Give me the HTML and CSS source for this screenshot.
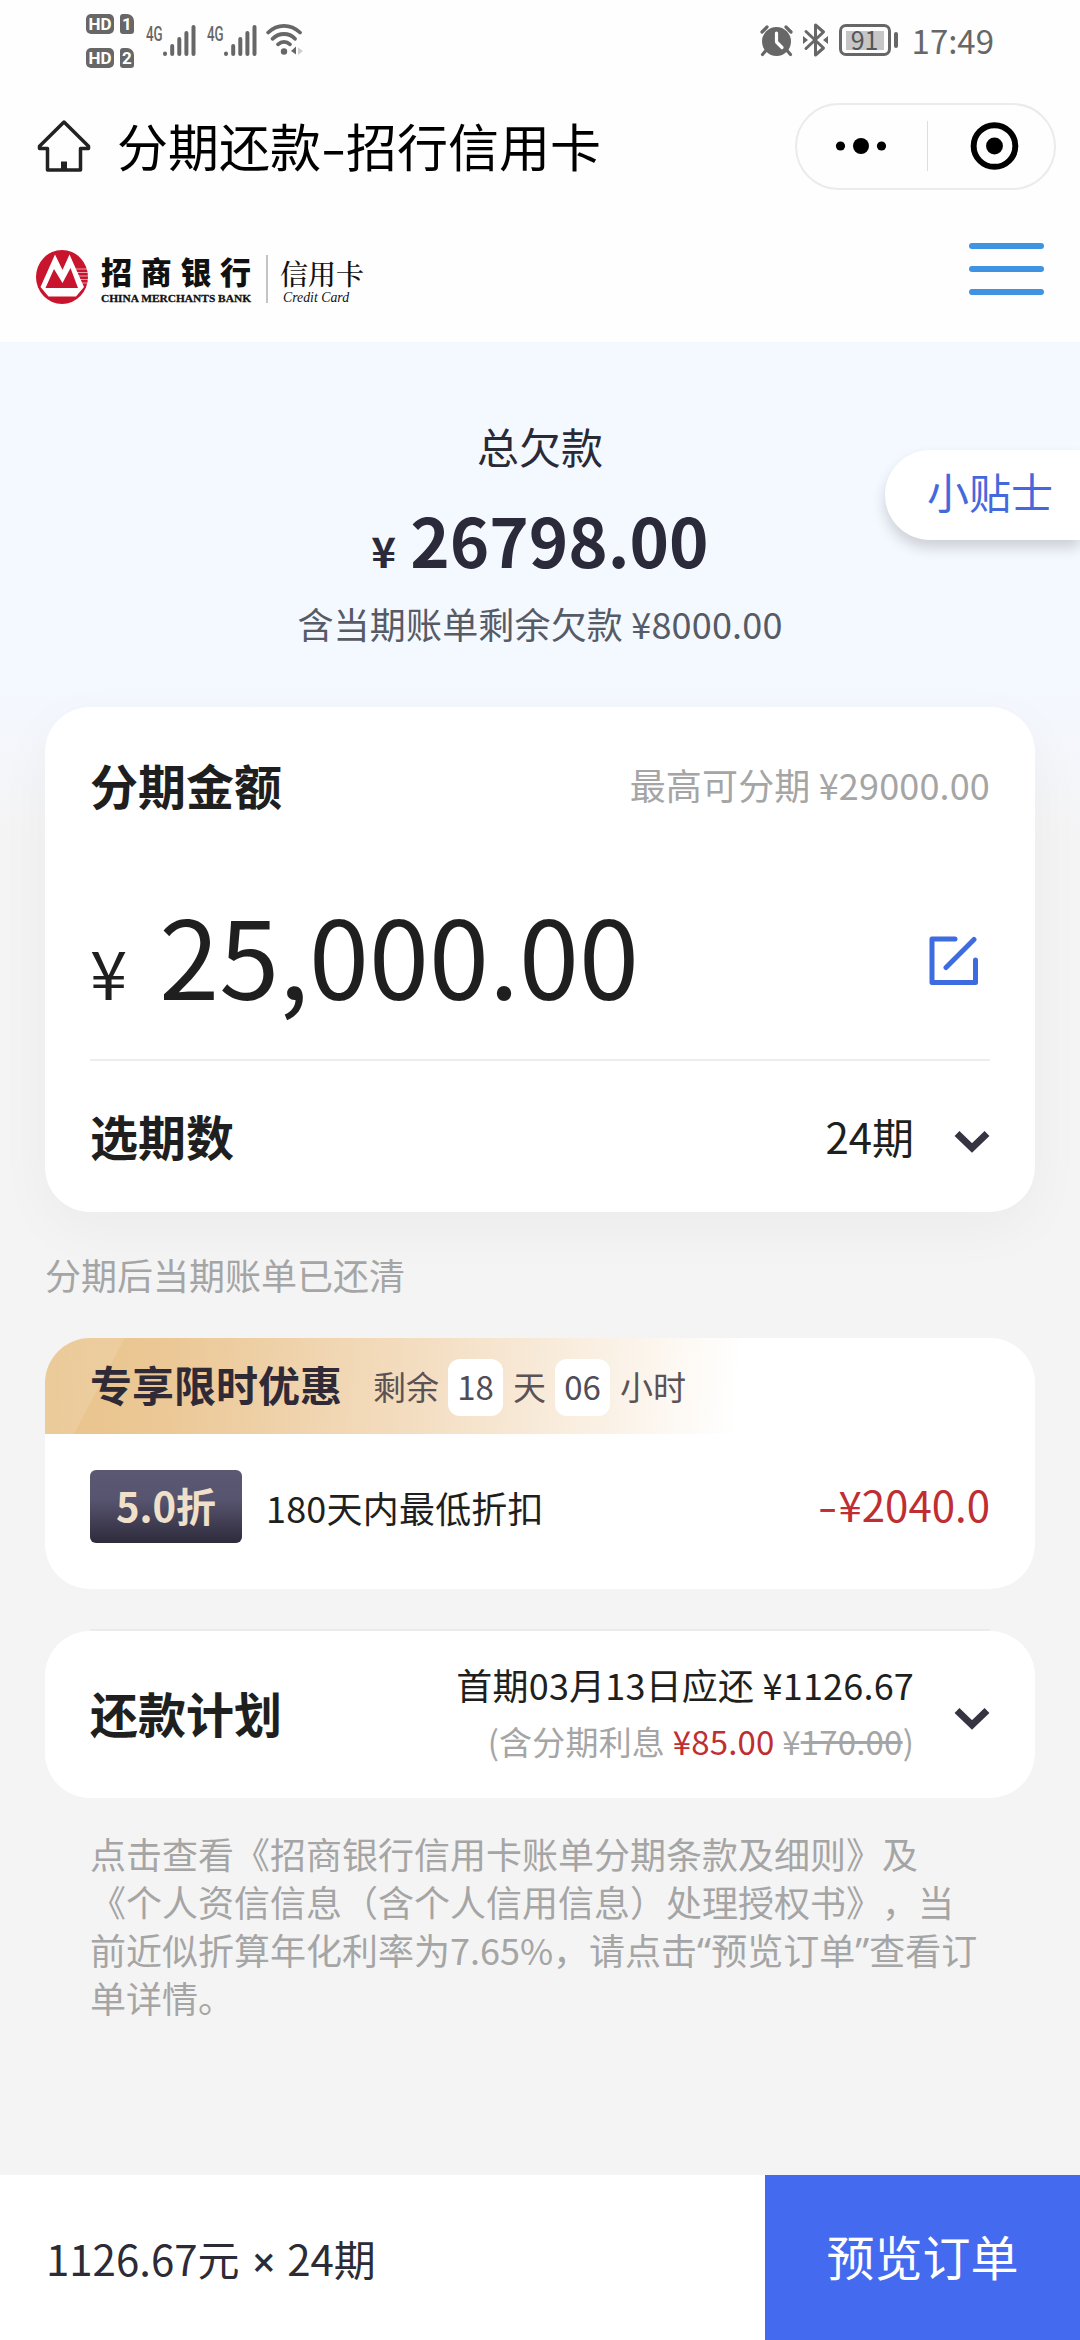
FILE: index.html
```html
<!DOCTYPE html>
<html lang="zh-CN">
<head>
<meta charset="utf-8">
<title>分期还款-招行信用卡</title>
<link rel="stylesheet" href="styles.css">
</head>
<body>
<div class="page">
  <div class="status">
    <div class="sims">
      <div class="sim"><span class="hd">HD</span><span class="slot">1</span></div>
      <div class="sim"><span class="hd">HD</span><span class="slot">2</span></div>
    </div>
    <div class="cell">
      <span class="net">4G</span>
      <svg class="bars" width="33" height="32" viewBox="0 0 33 32"><path d="M2 29.5v.5M9.2 22v8M16.3 15v15M23.4 9v21M30.5 3v27"/></svg>
    </div>
    <div class="cell">
      <span class="net">4G</span>
      <svg class="bars" width="33" height="32" viewBox="0 0 33 32"><path d="M2 29.5v.5M9.2 22v8M16.3 15v15M23.4 9v21M30.5 3v27"/></svg>
    </div>
    <svg class="wifi" width="38" height="34" viewBox="0 0 38 34">
      <g fill="none" stroke="#676767" stroke-width="3.8" stroke-linecap="round">
        <path d="M2.2 10.5Q9 3.8 18 3.8T34 10.5"/><path d="M6.5 16.8Q11.5 12 18 12T29 16.8"/><path d="M12 22.3Q14.8 19.8 18 19.8T24 22.3"/>
      </g>
      <circle cx="18" cy="29.5" r="3.2" fill="#676767"/>
      <path d="M25 29l5-4.500v8z" fill="#676767"/><path d="M32 25.500v7.500l5-4z" fill="#cfcfcf"/>
    </svg>
    <div class="status-right">
      <svg width="33" height="34" viewBox="0 0 33 34">
        <circle cx="16.500" cy="18.500" r="14.500" fill="#676767"/>
        <path d="M2 9l5-5M31 9l-5-5M5.500 28l-3 3.500M27.500 28l3 3.500" stroke="#676767" stroke-width="3.200" stroke-linecap="round"/>
        <path d="M16.500 10v9l5.500 5.500" fill="none" stroke="#fff" stroke-width="3.200" stroke-linecap="round" stroke-linejoin="round"/>
      </svg>
      <svg width="25" height="36" viewBox="0 0 25 36">
        <path d="M3 9.500l17.500 16.500-8 7V3l8 7L3 26.500" fill="none" stroke="#676767" stroke-width="3" stroke-linecap="round" stroke-linejoin="round"/>
        <path d="M0 14l5 4-5 4zM25 14l-5 4 5 4z" fill="#676767"/>
      </svg>
      <div class="battery"><span>91</span></div>
      <span class="clock">17:49</span>
    </div>
  </div>

  <div class="nav">
    <svg width="54" height="54" viewBox="0 0 54 54" fill="none" stroke="#222" stroke-width="3.500" stroke-linejoin="round">
      <path d="M27 3L2.500 27.200v2.300H10.500V51h33V29.500h8v-2.300z"/><path d="M27 42.500V51" stroke-width="6"/>
    </svg>
    <h1>分期还款<i>-</i>招行信用卡</h1>
    <div class="capsule">
      <svg width="130" height="50" viewBox="0 0 130 50"><circle cx="43.500" cy="25" r="4.600"/><circle cx="64" cy="25" r="8"/><circle cx="84.500" cy="25" r="4.600"/></svg>
      <svg class="close" width="130" height="50" viewBox="0 0 130 50"><circle cx="67" cy="25" r="21" fill="none" stroke="#000" stroke-width="6"/><circle cx="67" cy="25" r="8.500"/></svg>
    </div>
  </div>

  <div class="brand">
    <svg width="52" height="54" viewBox="0 0 52 54">
      <ellipse cx="26" cy="27" rx="26" ry="27" fill="#c8152d"/>
      <path d="M19 4.500L4.500 37l8 9.500h27.500l8-9.500L33.500 4.500 26.500 20z" fill="#fff"/>
      <path d="M9.500 38l8.500-19 8.500 14 8-15L42 38z" fill="#c8152d"/>
      <path d="M39.500 19h12M41 22.500h11M42 26h10M43.500 29.500h8.500M45 33h6.500" stroke="#fff" stroke-width="1.200" opacity=".6"/>
    </svg>
    <div class="bank"><b>招商银行</b><span>CHINA MERCHANTS BANK</span></div>
    <div class="credit"><b>信用卡</b><span>Credit Card</span></div>
    <div class="menu"><i></i><i></i><i></i></div>
  </div>

  <main>
    <section class="summary">
      <p class="label">总欠款</p>
      <p class="total"><small>¥</small>26798.00</p>
      <p class="sub">含当期账单剩余欠款 ¥8000.00</p>
      <div class="tips">小贴士</div>
    </section>

    <section class="card amount-card">
      <div class="row head"><h2>分期金额</h2><span class="muted">最高可分期 ¥29000.00</span></div>
      <div class="row amount">
        <p><small>¥</small>25,000.00</p>
        <svg width="50" height="50" viewBox="0 0 50 50" fill="none" stroke="#3d6be0" stroke-width="5" stroke-linecap="round" stroke-linejoin="round">
          <path d="M26 3H3v43.500h43.500V24M45 3.500L17 31.500"/>
        </svg>
      </div>
      <div class="row term">
        <h2>选期数</h2><span>24期</span>
        <svg class="chev" width="36" height="24" viewBox="0 0 36 24"><path d="M3 3.500l15 14.500L33 3.500"/></svg>
      </div>
    </section>

    <p class="note">分期后当期账单已还清</p>

    <section class="card offer">
      <div class="banner">
        <h3>专享限时优惠</h3>
        <span>剩余</span><b>18</b><span>天</span><b>06</b><span>小时</span>
      </div>
      <div class="row deal">
        <span class="badge">5.0折</span><span class="desc">180天内最低折扣</span><span class="minus"><i>-</i>¥2040.0</span>
      </div>
    </section>

    <section class="card plan">
      <h2>还款计划</h2>
      <div class="detail">
        <p>首期03月13日应还 ¥1126.67</p>
        <p class="interest">(含分期利息 <em>¥85.00</em> ¥<s>170.00</s>)</p>
      </div>
      <svg class="chev" width="36" height="24" viewBox="0 0 36 24"><path d="M3 3.500l15 14.500L33 3.500"/></svg>
    </section>

    <p class="terms">点击查看《招商银行信用卡账单分期条款及细则》及<br>《个人资信信息（含个人信用信息）处理授权书》，当<br>前近似折算年化利率为7.65%，请点击<q>“</q>预览订单<q>”</q>查看订<br>单详情。</p>
  </main>

  <footer>
    <p>1126.67元 <span class="times">×</span> 24期</p>
    <div class="submit">预览订单</div>
  </footer>
</div>
</body>
</html>
```

FILE: styles.css
```css
* { box-sizing: border-box; margin: 0; padding: 0; }
i, em { font-style: normal; }
svg { display: block; flex: none; }
body {
  width: 1080px;
  background: #f4f4f4;
  color: #1f1f20;
  font-family: "Noto Sans CJK SC", sans-serif;
  font-size: 36px;
}
.page { display: flex; flex-direction: column; height: 2340px; overflow: hidden; }
span, p, h1, h2, h3 { white-space: nowrap; }
.status, .nav, .brand { background: #fefefe; }

/* status bar */
.status { display: flex; height: 96px; padding: 14px 86px 0 86px; color: #676767; }
.sims { display: flex; flex-direction: column; gap: 14px; margin-right: 12px; }
.sim { display: flex; gap: 6px; }
.hd, .slot {
  height: 20px; border-radius: 5px; background: #676767; color: #fff;
  font: 700 17px/20px Roboto, sans-serif; text-align: center;
}
.hd { width: 28px; }
.slot { width: 14px; border-radius: 3px 7px 3px 3px; }
.cell { display: flex; width: 61px; padding-top: 10px; }
.net { width: 17px; font: 500 18px/17px "Roboto", sans-serif; height: 17px; transform: scale(.74, 1.1); transform-origin: left top; }
.bars { fill: none; stroke: #676767; stroke-width: 4; stroke-linecap: round; }
.wifi { margin: 8px 0 0 -2px; }
.status-right { display: flex; align-items: center; height: 52px; margin-left: auto; }
.status-right svg + svg { margin-left: 10px; }
.battery {
  position: relative; width: 52px; height: 32px; margin: 0 21px 0 11px; padding: 4px;
  border: 3px solid #676767; border-radius: 7px;
}
.battery::after {
  content: ""; position: absolute; right: -10px; top: 5px; width: 4px; height: 16px;
  border-radius: 2px; background: #676767;
}
.battery span { display: block; height: 19px; margin-top: -.5px; background: #c6c6c6; font-size: 25px; line-height: 16px; text-align: center; color: #555; }
.clock { font-size: 33px; line-height: 50px; }

/* mini program title bar */
.nav { display: flex; align-items: center; height: 100px; padding: 0 24px 0 37px; }
.nav h1 { margin-left: 26px; font-size: 51px; font-weight: 400; line-height: 76px; padding-bottom: 3px; color: #000; }
.nav h1 i { display: inline-block; width: 25px; text-align: center; transform: scaleX(1.450); }
.capsule {
  display: flex; align-items: center; width: 261px; height: 87px; margin-left: auto;
  border: 2px solid #ebebeb; border-radius: 44px;
}
.capsule .close { border-left: 1px solid #dedede; }

/* bank header */
.brand { display: flex; height: 146px; padding: 54px 36px 0 36px; color: #111; }
.bank { display: flex; flex-direction: column; width: 166px; margin-left: 12px; padding-left: 1px; }
.bank b { font-size: 31px; font-weight: 900; line-height: 42px; letter-spacing: 8.700px; }
.bank span { font: 700 11.400px/12px "Liberation Serif", serif; -webkit-text-stroke: .3px #111; }
.credit { display: flex; flex-direction: column; margin-top: 5px; padding-left: 12px; height: 48px; border-left: 2px solid #c4c4c4; }
.credit b { font-family: "Noto Serif CJK SC", "Noto Sans CJK SC", sans-serif; font-size: 28px; font-weight: 500; line-height: 37px; }
.credit span { padding-left: 3px; font: italic 13.800px/12px "Liberation Serif", serif; }
.menu { display: flex; flex-direction: column; gap: 17px; width: 75px; margin: -7px 0 0 auto; }
.menu i { height: 6px; border-radius: 3px; background: #4092e3; }

/* content */
main {
  flex: 1; padding: 0 45px;
  background: linear-gradient(#f4f8ff 0, #f4f8ff 350px, #f4f4f4 500px);
}
.summary { position: relative; height: 365px; padding-top: 74px; text-align: center; }
.label { font-size: 42px; line-height: 60px; color: #2a2a36; }
.total { margin-top: 18px; font-size: 67px; font-weight: 700; line-height: 90px; color: #2b2a3a; }
.total small { margin-right: 14px; font-size: 42px; }
.sub { margin-top: 1px; line-height: 54px; letter-spacing: .18px; color: #565b66; }
.tips {
  position: absolute; right: -45px; top: 108px; width: 195px; height: 90px; padding-left: 42px;
  border-radius: 45px 0 0 45px; background: #fff; box-shadow: 0 8px 14px rgba(0, 0, 0, .16);
  font-size: 42px; line-height: 82px; text-align: left; color: #4569dd;
}
.card { border-radius: 45px; background: #fff; }
.row { display: flex; align-items: center; }
h2 { font-size: 48px; font-weight: 700; line-height: 70px; }
.muted { margin-left: auto; letter-spacing: .16px; color: #a5a5a5; }
.amount-card { height: 505px; padding: 0 45px; box-shadow: 0 16px 56px rgba(0, 0, 0, .04); }
.head { height: 152px; padding-top: 2px; }
.amount { height: 202px; border-bottom: 2px solid #ededed; }
.amount p { font-size: 108px; line-height: 140px; padding-top: 5px; }
.amount small { margin-right: 32px; font-size: 67px; }
.amount svg { margin: 4px 11px 0 auto; }
.term { height: 151px; padding-bottom: 3px; }
.term span { margin-left: auto; margin-right: 40px; font-size: 42px; }
.chev { fill: none; stroke: #363442; stroke-width: 7; margin-top: 14px; }
.note { margin-top: 34px; line-height: 56px; color: #a5a5a5; }

.offer { height: 251px; margin-top: 36px; overflow: hidden; }
.banner {
  display: flex; align-items: center; width: 705px; height: 96px; padding-left: 45px;
  background: linear-gradient(118deg, rgba(255, 255, 255, .12) 70px, transparent 71px),
    linear-gradient(95deg, #e9c38b 0, #ebc896 18%, #f4dfc4 55%, #fff 98%);
}
.banner h3 { margin-right: 31px; padding-bottom: 5px; font-size: 42px; line-height: 60px; color: #302a37; }
.banner span { font-size: 33px; color: #5b5256; }
.banner b { width: 55px; height: 57px; margin: 2px 10px 0 9px; border-radius: 12px; background: #fff; font-size: 33px; font-weight: 400; line-height: 54px; text-align: center; color: #514d57; }
.deal { height: 146px; padding: 0 45px; }
.badge {
  width: 152px; height: 73px; margin-top: -2px; border-radius: 6px; text-align: center;
  background: linear-gradient(#5a5873 0, #57546f 40%, #2e2b3c 100%);
  font-size: 40px; font-weight: 700; line-height: 71px; color: #f0e0c9;
}
.desc { margin-left: 24px; letter-spacing: .2px; }
.minus { margin-left: auto; margin-top: -8px; font-size: 42px; color: #bf2e32; }
.minus i { display: inline-block; width: 21px; text-align: center; transform: scaleX(1.350); }

.plan { display: flex; align-items: center; height: 167px; margin-top: 42px; padding: 0 45px; position: relative; }
.plan::before { content: ""; position: absolute; left: 45px; right: 45px; top: -2px; height: 2px; background: #ebebeb; }
.plan h2 { padding-bottom: 5px; }
.detail { margin-left: auto; margin-right: 40px; padding-bottom: 3px; text-align: right; line-height: 57px; letter-spacing: .2px; }
.plan .chev { margin-top: 9px; }
.interest { font-size: 33px; color: #a5a5a5; }
.interest em { color: #bf2e32; }
.terms { margin: 31px 0 0 45px; line-height: 48px; color: #a5a5a5; text-spacing-trim: space-all; font-kerning: none; font-feature-settings: "chws" 0, "halt" 0, "palt" 0; }
.terms q { quotes: none; font-family: "Noto Sans", sans-serif; font-size: 39px; line-height: 1; }
.terms q::before, .terms q::after { content: none; }

footer { display: flex; align-items: center; height: 165px; background: #fff; color: #2c2b36; }
footer p { padding-left: 46px; font-size: 42px; }
.times { margin: 0 3px 0 4px; font-family: Roboto, sans-serif; font-size: 41px; }
.submit { width: 315px; height: 165px; margin-left: auto; background: #446aef; color: #fff; font-size: 48px; line-height: 161px; text-align: center; }
```
